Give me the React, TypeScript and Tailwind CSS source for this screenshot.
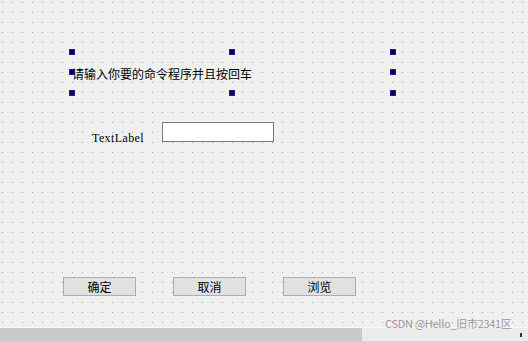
import React from "react";

function Handle({ pos }: { pos: string }) {
  return <div className={`absolute w-[6px] h-[6px] bg-[#00005a] border border-[#1f1f8f] ${pos}`} />;
}

export default function App() {
  return (
    <div className="relative w-[528px] h-[341px] overflow-hidden bg-[#f0f0f0] font-['Noto_Sans_CJK_SC',sans-serif]">
      <div className="h-[327px] flex flex-col bg-[radial-gradient(circle_at_2.5px_2.5px,#a0a0a0_0.7px,transparent_0.8px)] bg-[length:10px_10px]">
        <div className="relative ml-[72px] mt-[52px] w-[321px] h-[41px] flex items-center">
          <span className="mt-[2px] text-[12px] leading-none text-black whitespace-nowrap">请输入你要的命令程序并且按回车</span>
          <Handle pos="left-[-3px] top-[-3px]" />
          <Handle pos="left-[157px] top-[-3px]" />
          <Handle pos="left-[318px] top-[-3px]" />
          <Handle pos="left-[-3px] top-[17px]" />
          <Handle pos="left-[318px] top-[17px]" />
          <Handle pos="left-[-3px] top-[38px]" />
          <Handle pos="left-[157px] top-[38px]" />
          <Handle pos="left-[318px] top-[38px]" />
        </div>
        <div className="flex items-start mt-[29px]">
          <span className="ml-[92px] mt-[9px] w-[70px] font-['Liberation_Serif',serif] text-[12px] leading-[14px] tracking-[0.4px] text-black">TextLabel</span>
          <div className="w-[112px] h-[20px] border border-[#7a7a7a] bg-white" />
        </div>
        <div className="flex mt-[132px] ml-[63px] gap-[37px]">
          {["确定", "取消", "浏览"].map((t) => (
            <div key={t} className="w-[73px] h-[19px] border border-[#adadad] bg-[#e1e1e1] flex items-center justify-center text-[12px] leading-none text-black">
              {t}
            </div>
          ))}
        </div>
      </div>
      <div className="h-[14px] flex border-t border-[#fafafa]">
        <div className="w-[362px] bg-[#c9c9c9]" />
        <div className="flex-1 bg-[#ececec] relative">
          <div className="absolute left-[158px] top-[5px] w-[2px] h-[4px] bg-[#333]" />
        </div>
      </div>
      <div className="absolute left-[385px] top-[317px] text-[11px] leading-[12px] tracking-[-0.3px] text-[#9a9a9a] whitespace-nowrap font-['Noto_Sans_CJK_SC',sans-serif]">
        CSDN @Hello_旧市2341区
      </div>
    </div>
  );
}
